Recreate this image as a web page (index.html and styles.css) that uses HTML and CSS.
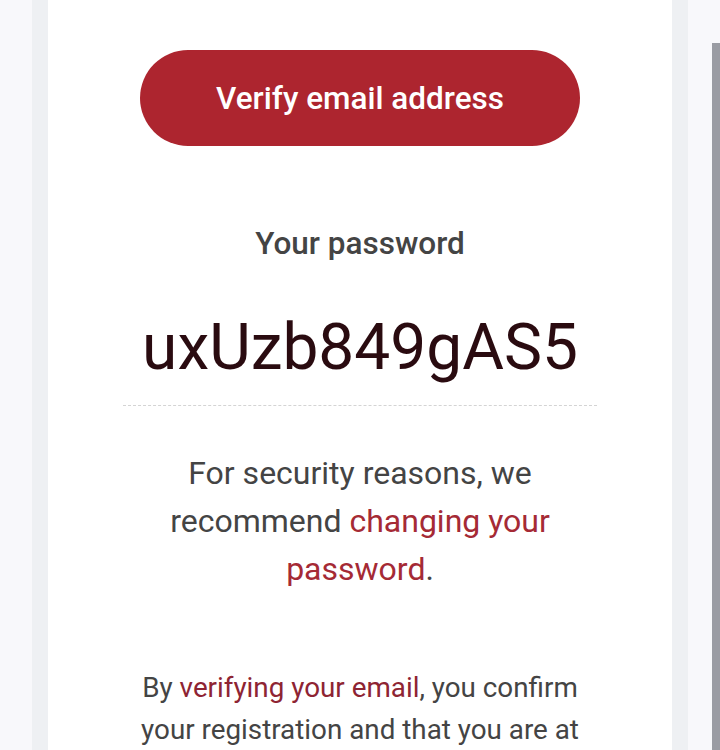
FILE: index.html
```html
<!DOCTYPE html>
<html lang="en">
<head>
    <meta charset="UTF-8">
    <meta name="viewport" content="width=device-width, initial-scale=1.0">
    <title>Verify your email</title>
    <link rel="stylesheet" href="styles.css">
</head>
<body>
    <div class="frame">
        <div class="card">
            <a class="btn" href="#">Verify email address</a>

            <h2 class="label">Your password</h2>
            <div class="password">uxUzb849gAS5</div>

            <p class="note">For security reasons, we recommend <a href="#">changing your password</a>.</p>

            <p class="legal">By <a href="#">verifying your email</a>, you confirm your registration and that you are at</p>
        </div>
    </div>
    <div class="scroll-thumb"></div>
</body>
</html>
```

FILE: styles.css
```css
/* page background */
body {
    font-family: Roboto, "Liberation Sans", sans-serif;
    background: #f8f8fb;
    color: #444;
    margin: 0;
    padding: 0 32px;
    height: 750px;
    overflow: hidden;
}

/* grey band round the mail card */
.frame {
    background: #eef0f3;
    padding: 0 16px;
    height: 100%;
}

.card {
    background: #fff;
    height: 100%;
    padding-top: 50px;
    display: flex;
    flex-direction: column;
    align-items: center;
    text-align: center;
}

.btn {
    display: flex;
    justify-content: center;
    align-items: center;
    width: 440px;
    height: 96px;
    border-radius: 48px;
    background: #ad252f;
    color: #fff;
    font-size: 31.5px;
    font-weight: 500;
    text-decoration: none;
}

.label {
    margin: 80px 0 0;
    font-size: 31.5px;
    font-weight: 500;
    color: #444;
    line-height: 36px;
}

.password {
    margin-top: 48px;
    width: 474px;
    padding-bottom: 19px;
    border-bottom: 1px dashed #d4d4d4;
    font-size: 64px;
    line-height: 76px;
    color: #2a0b10;
}

.note {
    margin: 43px 0 0;
    width: 420px;
    font-size: 32px;
    line-height: 48px;
}

.note a {
    color: #a52a35;
    text-decoration: none;
}

.legal {
    margin: 74px 0 0;
    width: 460px;
    font-size: 27.8px;
    line-height: 42px;
}

.legal a {
    color: #8e2433;
    text-decoration: none;
}

/* browser scrollbar thumb */
.scroll-thumb {
    position: fixed;
    right: 0;
    top: 43px;
    width: 8px;
    height: 707px;
    background: #9a9ca3;
}
```
